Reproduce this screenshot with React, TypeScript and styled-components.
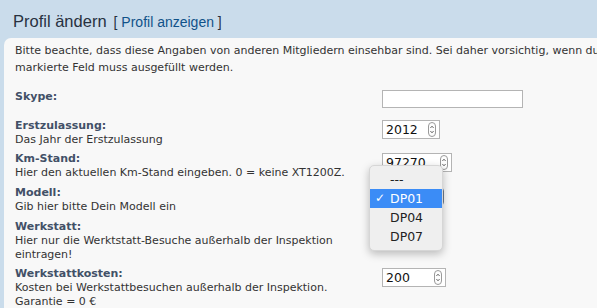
import styled, { createGlobalStyle } from "styled-components";

const GlobalStyle = createGlobalStyle`
  html, body {
    margin: 0;
    padding: 0;
    overflow: hidden;
    background: #cadceb;
  }
`;

const Page = styled.div`
  width: 900px;
  height: 308px;
  background: #cadceb;
  font-family: "DejaVu Sans", Verdana, sans-serif;
  font-size: 11px;
  color: #333333;
`;

const Header = styled.div`
  box-sizing: border-box;
  height: 38px;
  display: flex;
  align-items: center;
  padding: 4px 0 0 13px;
  gap: 7px;
  font-family: "Liberation Sans", Arial, sans-serif;
  color: #28313f;
`;

const Title = styled.h2`
  margin: 0;
  font-size: 16.5px;
  font-weight: normal;
`;

const Bracket = styled.span`
  font-size: 14px;
  padding-top: 2px;
`;

const Link = styled.a`
  color: #105289;
  text-decoration: none;
`;

const Panel = styled.div`
  margin-left: 4px;
  height: 270px;
  background: #f8f8f8;
  border-top-left-radius: 7px;
  padding: 4px 0 0 11px;
`;

const Intro = styled.p`
  margin: 0 0 12px;
  line-height: 17px;
  white-space: nowrap;
`;

const Fieldset = styled.div`
  display: flex;
  flex-direction: column;
`;

const Row = styled.div<{ $minHeight?: number }>`
  box-sizing: border-box;
  display: grid;
  grid-template-columns: 367px 1fr;
  align-items: start;
  padding: 2px 0;
  min-height: ${({ $minHeight }) => ($minHeight ? `${$minHeight}px` : "auto")};
`;

const Term = styled.div`
  line-height: 14px;
  white-space: nowrap;
`;

const Label = styled.label`
  display: block;
  font-weight: bold;
  color: #425067;
`;

const TextInput = styled.input`
  box-sizing: border-box;
  width: 141px;
  height: 18px;
  margin: 0;
  border: 1px solid #b4b4b4;
  background: #ffffff;
  outline: none;
`;

const NumberBox = styled.div<{ $width: number }>`
  box-sizing: border-box;
  width: ${({ $width }) => $width}px;
  height: 19px;
  margin-top: 1px;
  display: flex;
  align-items: center;
  justify-content: space-between;
  padding: 0 3px 0 3px;
  border: 1px solid #b4b4b4;
  background: #ffffff;
  font-size: 12.5px;
  color: #111111;
`;

const Spinner = styled.svg`
  flex: none;
`;

const SelectWrap = styled.div`
  position: relative;
  width: 62px;
  height: 20px;
`;

const SelectBox = styled.div`
  box-sizing: border-box;
  width: 62px;
  height: 19px;
  margin-top: 1px;
  border: 1px solid #6f7c8c;
  border-radius: 4px;
  background: #e8eef7;
`;

const Popup = styled.ul`
  position: absolute;
  left: -13px;
  top: -21px;
  width: 72px;
  margin: 0;
  padding: 4px 0;
  list-style: none;
  background: #efefef;
  border: 1px solid #d6d6d6;
  border-radius: 5px;
  box-shadow: 0 3px 8px rgba(0, 0, 0, 0.25);
  font-size: 12.5px;
  color: #222222;
  z-index: 2;
`;

const Option = styled.li<{ $selected?: boolean }>`
  position: relative;
  height: 19px;
  line-height: 19px;
  padding-left: 20px;
  background: ${({ $selected }) => ($selected ? "#3b8cf6" : "transparent")};
  color: ${({ $selected }) => ($selected ? "#ffffff" : "#222222")};
`;

const Check = styled.span`
  position: absolute;
  left: 5px;
  top: 0;
  font-size: 12px;
`;

function NumberField({ value, width }: { value: string; width: number }) {
  return (
    <NumberBox $width={width}>
      <span>{value}</span>
      <Spinner width="8" height="15" viewBox="0 0 8 15">
        <rect x="0.5" y="0.5" width="7" height="14" rx="3.5" fill="#fdfdfd" stroke="#9a9a9a" />
        <path d="M2.4 6 L4 4.2 L5.6 6" fill="none" stroke="#555" strokeWidth="0.9" />
        <path d="M2.4 9 L4 10.8 L5.6 9" fill="none" stroke="#555" strokeWidth="0.9" />
      </Spinner>
    </NumberBox>
  );
}

export default function App() {
  return (
    <Page>
      <GlobalStyle />
      <Header>
        <Title>Profil ändern</Title>
        <Bracket>
          [ <Link href="#">Profil anzeigen</Link> ]
        </Bracket>
      </Header>
      <Panel>
        <Intro>
          Bitte beachte, dass diese Angaben von anderen Mitgliedern einsehbar sind. Sei daher vorsichtig, wenn du
          persönliche Daten angibst. Jedes rot
          <br />
          markierte Feld muss ausgefüllt werden.
        </Intro>
        <Fieldset>
          <Row $minHeight={29}>
            <Term>
              <Label>Skype:</Label>
            </Term>
            <div>
              <TextInput type="text" />
            </div>
          </Row>
          <Row $minHeight={33}>
            <Term>
              <Label>Erstzulassung:</Label>
              Das Jahr der Erstzulassung
            </Term>
            <NumberField value="2012" width={58} />
          </Row>
          <Row $minHeight={34}>
            <Term>
              <Label>Km-Stand:</Label>
              Hier den aktuellen Km-Stand eingeben. 0 = keine XT1200Z.
            </Term>
            <NumberField value="97270" width={70} />
          </Row>
          <Row $minHeight={34}>
            <Term>
              <Label>Modell:</Label>
              Gib hier bitte Dein Modell ein
            </Term>
            <SelectWrap>
              <SelectBox />
              <Popup>
                <Option>---</Option>
                <Option $selected>
                  <Check>✓</Check>DP01
                </Option>
                <Option>DP04</Option>
                <Option>DP07</Option>
              </Popup>
            </SelectWrap>
          </Row>
          <Row $minHeight={47}>
            <Term>
              <Label>Werkstatt:</Label>
              Hier nur die Werktstatt-Besuche außerhalb der Inspektion
              <br />
              eintragen!
            </Term>
            <div />
          </Row>
          <Row>
            <Term>
              <Label>Werkstattkosten:</Label>
              Kosten bei Werkstattbesuchen außerhalb der Inspektion.
              <br />
              Garantie = 0 €
            </Term>
            <NumberField value="200" width={64} />
          </Row>
        </Fieldset>
      </Panel>
    </Page>
  );
}
